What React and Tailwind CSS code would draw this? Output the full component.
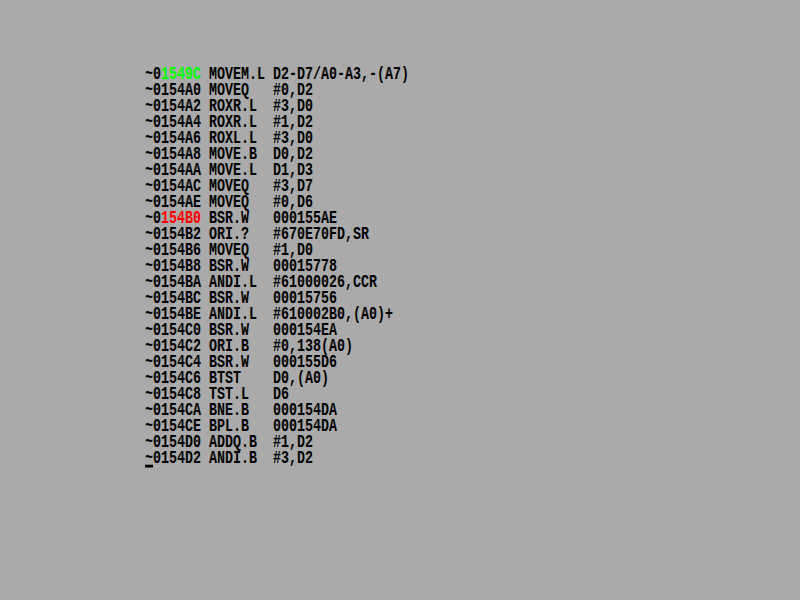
const lines = [
  ['01549C', 'MOVEM.L D2-D7/A0-A3,-(A7)'],
  ['0154A0', 'MOVEQ   #0,D2'],
  ['0154A2', 'ROXR.L  #3,D0'],
  ['0154A4', 'ROXR.L  #1,D2'],
  ['0154A6', 'ROXL.L  #3,D0'],
  ['0154A8', 'MOVE.B  D0,D2'],
  ['0154AA', 'MOVE.L  D1,D3'],
  ['0154AC', 'MOVEQ   #3,D7'],
  ['0154AE', 'MOVEQ   #0,D6'],
  ['0154B0', 'BSR.W   000155AE'],
  ['0154B2', 'ORI.?   #670E70FD,SR'],
  ['0154B6', 'MOVEQ   #1,D0'],
  ['0154B8', 'BSR.W   00015778'],
  ['0154BA', 'ANDI.L  #61000026,CCR'],
  ['0154BC', 'BSR.W   00015756'],
  ['0154BE', 'ANDI.L  #610002B0,(A0)+'],
  ['0154C0', 'BSR.W   000154EA'],
  ['0154C2', 'ORI.B   #0,138(A0)'],
  ['0154C4', 'BSR.W   000155D6'],
  ['0154C6', 'BTST    D0,(A0)'],
  ['0154C8', 'TST.L   D6'],
  ['0154CA', 'BNE.B   000154DA'],
  ['0154CE', 'BPL.B   000154DA'],
  ['0154D0', 'ADDQ.B  #1,D2'],
  ['0154D2', 'ANDI.B  #3,D2'],
];

export default function App() {
  return (
    <div className="w-[800px] h-[600px] bg-[#aaaaaa] pt-[67px] pl-[145px] text-black">
      <div className="font-['Liberation_Mono',monospace] font-bold text-[13.33px]">
        {lines.map(([addr, rest], i) => {
          const last = i === lines.length - 1;
          let addrCls = '';
          if (i === 0) addrCls = 'text-[#00ff00]';
          if (i === 9) addrCls = 'text-[#ff0000]';
          return (
            <div key={i} className="h-4 flex items-center">
              <div className="h-[11.4px] leading-[11.4px] whitespace-pre scale-y-140 flex">
                <span className={last ? 'underline decoration-2 underline-offset-1' : ''}>~</span>
                <span>{addr.slice(0, 1)}</span>
                <span className={addrCls}>{addr.slice(1)}</span>
                <span>{' ' + rest}</span>
              </div>
            </div>
          );
        })}
      </div>
    </div>
  );
}
